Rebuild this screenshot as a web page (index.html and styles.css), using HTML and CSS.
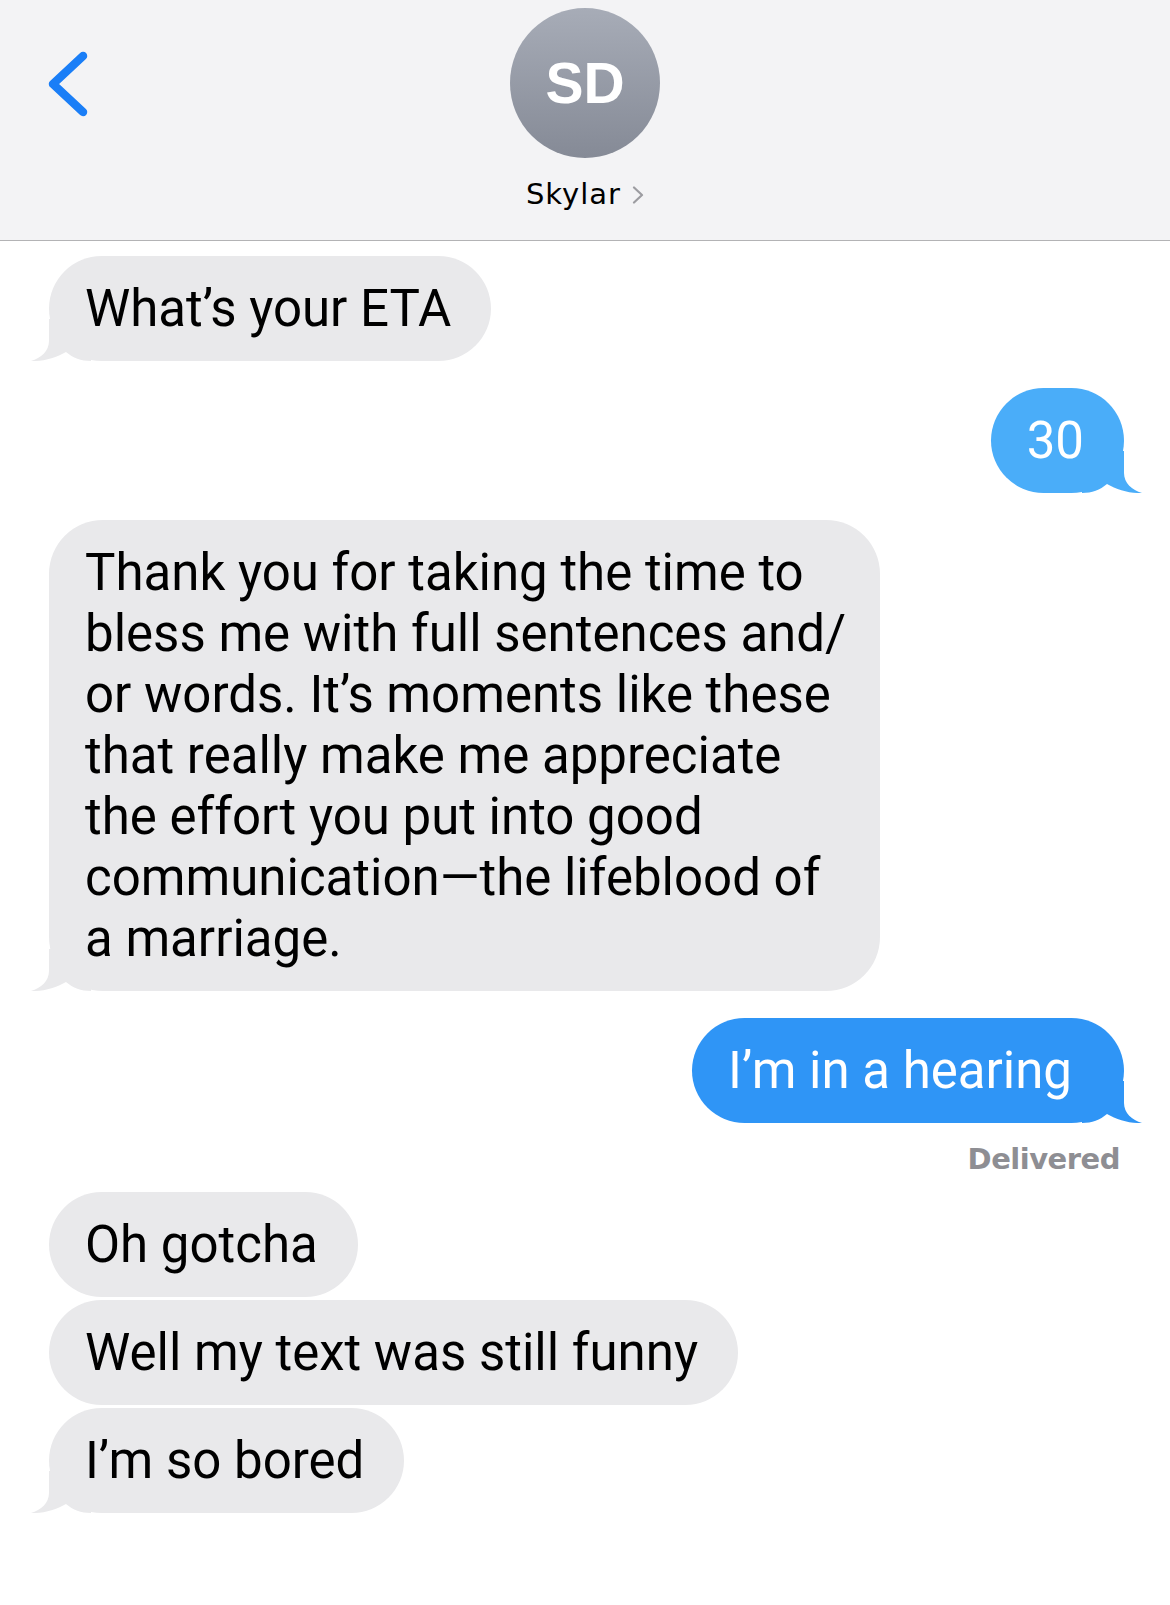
FILE: index.html
```html
<!DOCTYPE html>
<html lang="en">
<head>
<meta charset="utf-8">
<title>Skylar</title>
<link rel="stylesheet" href="styles.css">
</head>
<body>
<header class="nav">
  <div class="nav-left">
    <svg class="back" width="46" height="72" viewBox="0 0 46 72"><path d="M38 7 L8 35 L38 63" fill="none" stroke="#1a7ef7" stroke-width="8.5" stroke-linecap="round" stroke-linejoin="round"/></svg>
  </div>
  <div class="nav-center">
    <div class="avatar">SD</div>
    <div class="name"><span>Skylar</span><svg class="name-chev" width="12" height="18" viewBox="0 0 12 18"><path d="M2 1.5 L10 9 L2 16.5" fill="none" stroke="#9c9ca1" stroke-width="2.2" stroke-linecap="round" stroke-linejoin="round"/></svg></div>
  </div>
  <div class="nav-right"></div>
</header>

<main class="thread">
  <div class="row them">
    <div class="bubble"><svg class="tail" viewBox="0 0 60 42"><path d="M18 0 L18 22 C18 32 10 39 0 42 C12 42.5 25 39 35 33 C42 39 50 42 60 42 L60 0 Z"/></svg><span class="txt">What’s your ETA</span></div>
  </div>
  <div class="row me gap-lg">
    <div class="bubble light"><svg class="tail" viewBox="0 0 60 42"><path d="M18 0 L18 22 C18 32 10 39 0 42 C12 42.5 25 39 35 33 C42 39 50 42 60 42 L60 0 Z"/></svg><span class="txt">30</span></div>
  </div>
  <div class="row them gap-lg">
    <div class="bubble long"><svg class="tail" viewBox="0 0 60 42"><path d="M18 0 L18 22 C18 32 10 39 0 42 C12 42.5 25 39 35 33 C42 39 50 42 60 42 L60 0 Z"/></svg><span class="txt">Thank you for taking the time to<br>bless me with full sentences and/<br>or words. It’s moments like these<br>that really make me appreciate<br>the effort you put into good<br>communication—the lifeblood of<br>a marriage.</span></div>
  </div>
  <div class="row me gap-lg">
    <div class="bubble dark wide-r"><svg class="tail" viewBox="0 0 60 42"><path d="M18 0 L18 22 C18 32 10 39 0 42 C12 42.5 25 39 35 33 C42 39 50 42 60 42 L60 0 Z"/></svg><span class="txt">I’m in a hearing</span></div>
  </div>
  <div class="status">Delivered</div>
  <div class="row them">
    <div class="bubble"><span class="txt">Oh gotcha</span></div>
  </div>
  <div class="row them gap-sm">
    <div class="bubble"><span class="txt">Well my text was still funny</span></div>
  </div>
  <div class="row them gap-sm">
    <div class="bubble"><svg class="tail" viewBox="0 0 60 42"><path d="M18 0 L18 22 C18 32 10 39 0 42 C12 42.5 25 39 35 33 C42 39 50 42 60 42 L60 0 Z"/></svg><span class="txt">I’m so bored</span></div>
  </div>
</main>
</body>
</html>
```

FILE: styles.css
```css
html, body {
  margin: 0;
  padding: 0;
  background: #ffffff;
}

body {
  width: 1170px;
  min-height: 1605px;
  font-family: Roboto, "Liberation Sans", Arial, sans-serif;
}

.nav {
  display: grid;
  grid-template-columns: 1fr auto 1fr;
  height: 241px;
  box-sizing: border-box;
  border-bottom: 1px solid #b3b3b5;
  background: #f3f3f5;
}

.nav-left {
  padding: 49px 0 0 45px;
}

.back {
  display: block;
}

.nav-center {
  display: flex;
  flex-direction: column;
  align-items: center;
  padding-top: 8px;
}

.avatar {
  width: 150px;
  height: 150px;
  border-radius: 50%;
  background: linear-gradient(180deg, #a7acb7 0%, #858a96 100%);
  color: #ffffff;
  font-family: "Liberation Sans", Arial, sans-serif;
  font-weight: 700;
  font-size: 57px;
  display: flex;
  align-items: center;
  justify-content: center;
}

.name {
  margin-top: 19px;
  display: flex;
  align-items: center;
  font-family: "DejaVu Sans", sans-serif;
  font-size: 29px;
  line-height: 34px;
  letter-spacing: 1px;
  color: #000000;
}

.name-chev {
  margin-left: 11px;
  margin-top: 2px;
  display: block;
}

.thread {
  display: flex;
  flex-direction: column;
  padding: 15px 46px 0 49px;
}

.row {
  display: flex;
}

.row.me {
  justify-content: flex-end;
}

.gap-lg {
  margin-top: 27px;
}

.gap-sm {
  margin-top: 3px;
}

.bubble {
  position: relative;
  box-sizing: border-box;
  padding: 22px 40px 22px 36px;
  border-radius: 54px;
  font-size: 51px;
  line-height: 61px;
  white-space: nowrap;
}

.them .bubble {
  background: #e9e9eb;
  color: #000000;
  fill: #e9e9eb;
}

.me .bubble {
  color: #ffffff;
}

.bubble.light {
  background: #4aadf9;
  fill: #4aadf9;
}

.bubble.dark {
  background: #2f95f6;
  fill: #2f95f6;
}

.bubble.long {
  width: 831px;
}

.bubble.wide-r {
  padding-right: 52px;
}

.txt {
  position: relative;
}

.tail {
  position: absolute;
  bottom: 0;
  width: 60px;
  height: 42px;
}

.them .tail {
  left: -18px;
}

.me .tail {
  right: -18px;
  transform: scaleX(-1);
}

.status {
  align-self: flex-end;
  margin: 17px 4px 14px 0;
  font-family: "DejaVu Sans", sans-serif;
  font-weight: 700;
  font-size: 29px;
  line-height: 38px;
  letter-spacing: -0.5px;
  color: #8e8e93;
}
```
